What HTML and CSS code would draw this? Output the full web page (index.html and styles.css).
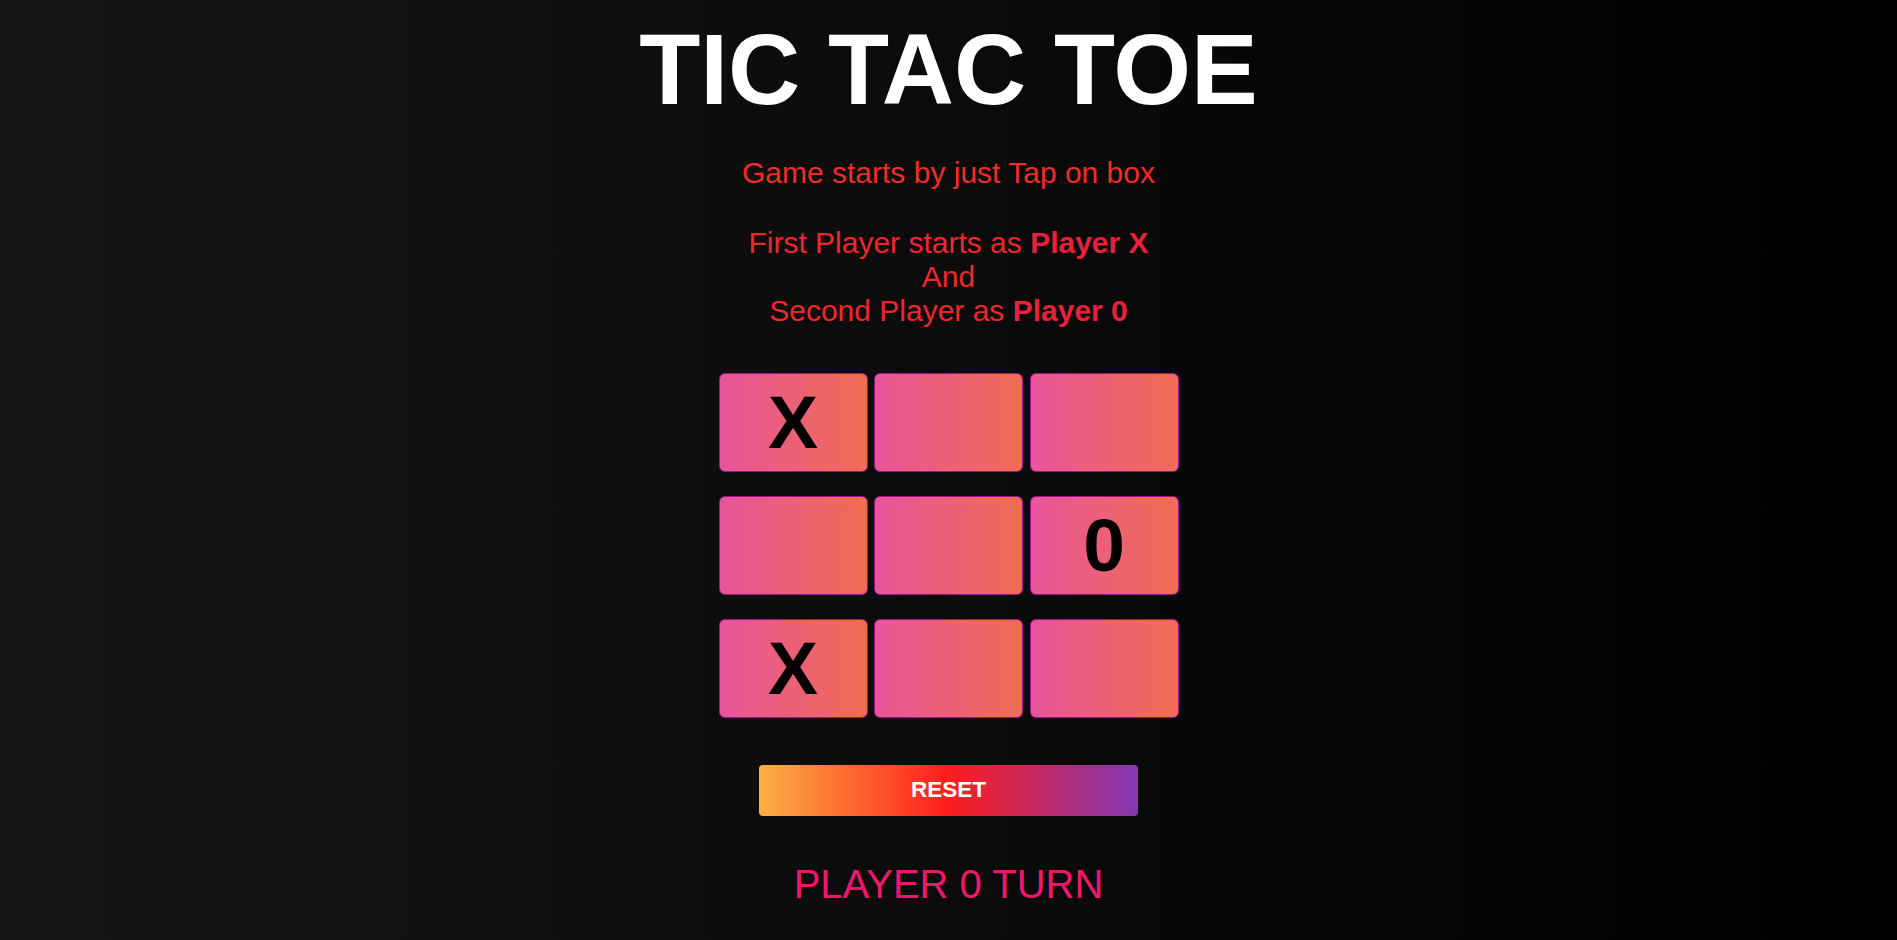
FILE: index.html
```html
<!DOCTYPE html>
<html lang="en">
<head>
<meta charset="utf-8">
<title>Tic Tac Toe</title>
<link rel="stylesheet" href="styles.css">
</head>
<body>
<main class="game">
  <h1 class="title">TIC TAC TOE</h1>
  <p class="intro">Game starts by just Tap on box</p>
  <p class="rules">First Player starts as <b>Player X</b><br>And<br>Second Player as <b>Player 0</b></p>
  <div class="board">
    <div class="box">X</div>
    <div class="box"></div>
    <div class="box"></div>
    <div class="box"></div>
    <div class="box"></div>
    <div class="box">0</div>
    <div class="box">X</div>
    <div class="box"></div>
    <div class="box"></div>
  </div>
  <button class="reset">RESET</button>
  <p class="turn">PLAYER 0 TURN</p>
</main>
</body>
</html>
```
FILE: styles.css
```css
html, body {
  margin: 0;
  padding: 0;
  min-height: 100vh;
}
body {
  background: linear-gradient(to right, #161616, #000000);
  font-family: "Liberation Sans", Arial, sans-serif;
  overflow: hidden;
}
.game {
  display: flex;
  flex-direction: column;
  align-items: center;
  padding-top: 18.7px;
}
.title {
  margin: 0;
  font-size: 100px;
  line-height: 100px;
  font-weight: 700;
  color: #ffffff;
}
.intro {
  margin: 37.4px 0 0;
  font-size: 30px;
  line-height: 33.5px;
  color: #f12c2a;
}
.rules {
  margin: 36.2px 0 0;
  font-size: 30px;
  line-height: 34px;
  color: #f0262d;
  text-align: center;
}
.rules b {
  color: #e8203a;
}
.board {
  margin-top: 45.2px;
  display: grid;
  grid-template-columns: repeat(3, 149px);
  grid-auto-rows: 99px;
  column-gap: 6.5px;
  row-gap: 24px;
}
.box {
  box-sizing: border-box;
  border: 1px solid #9a1490;
  border-radius: 6px;
  background: linear-gradient(to right, #e8559a, #f06c52);
  display: flex;
  align-items: center;
  justify-content: center;
  font-size: 75px;
  font-weight: 700;
  color: #000000;
}
.reset {
  margin-top: 46.7px;
  width: 379px;
  height: 51px;
  border: none;
  border-radius: 4px;
  background: linear-gradient(to right, #fcb045, #fd1d1d, #833ab4);
  color: #ffffff;
  font-family: "Liberation Sans", Arial, sans-serif;
  font-size: 22.5px;
  font-weight: 700;
  padding: 0;
}
.turn {
  margin: 45.5px 0 0;
  font-size: 40px;
  line-height: 46px;
  color: #f2166b;
}
```
